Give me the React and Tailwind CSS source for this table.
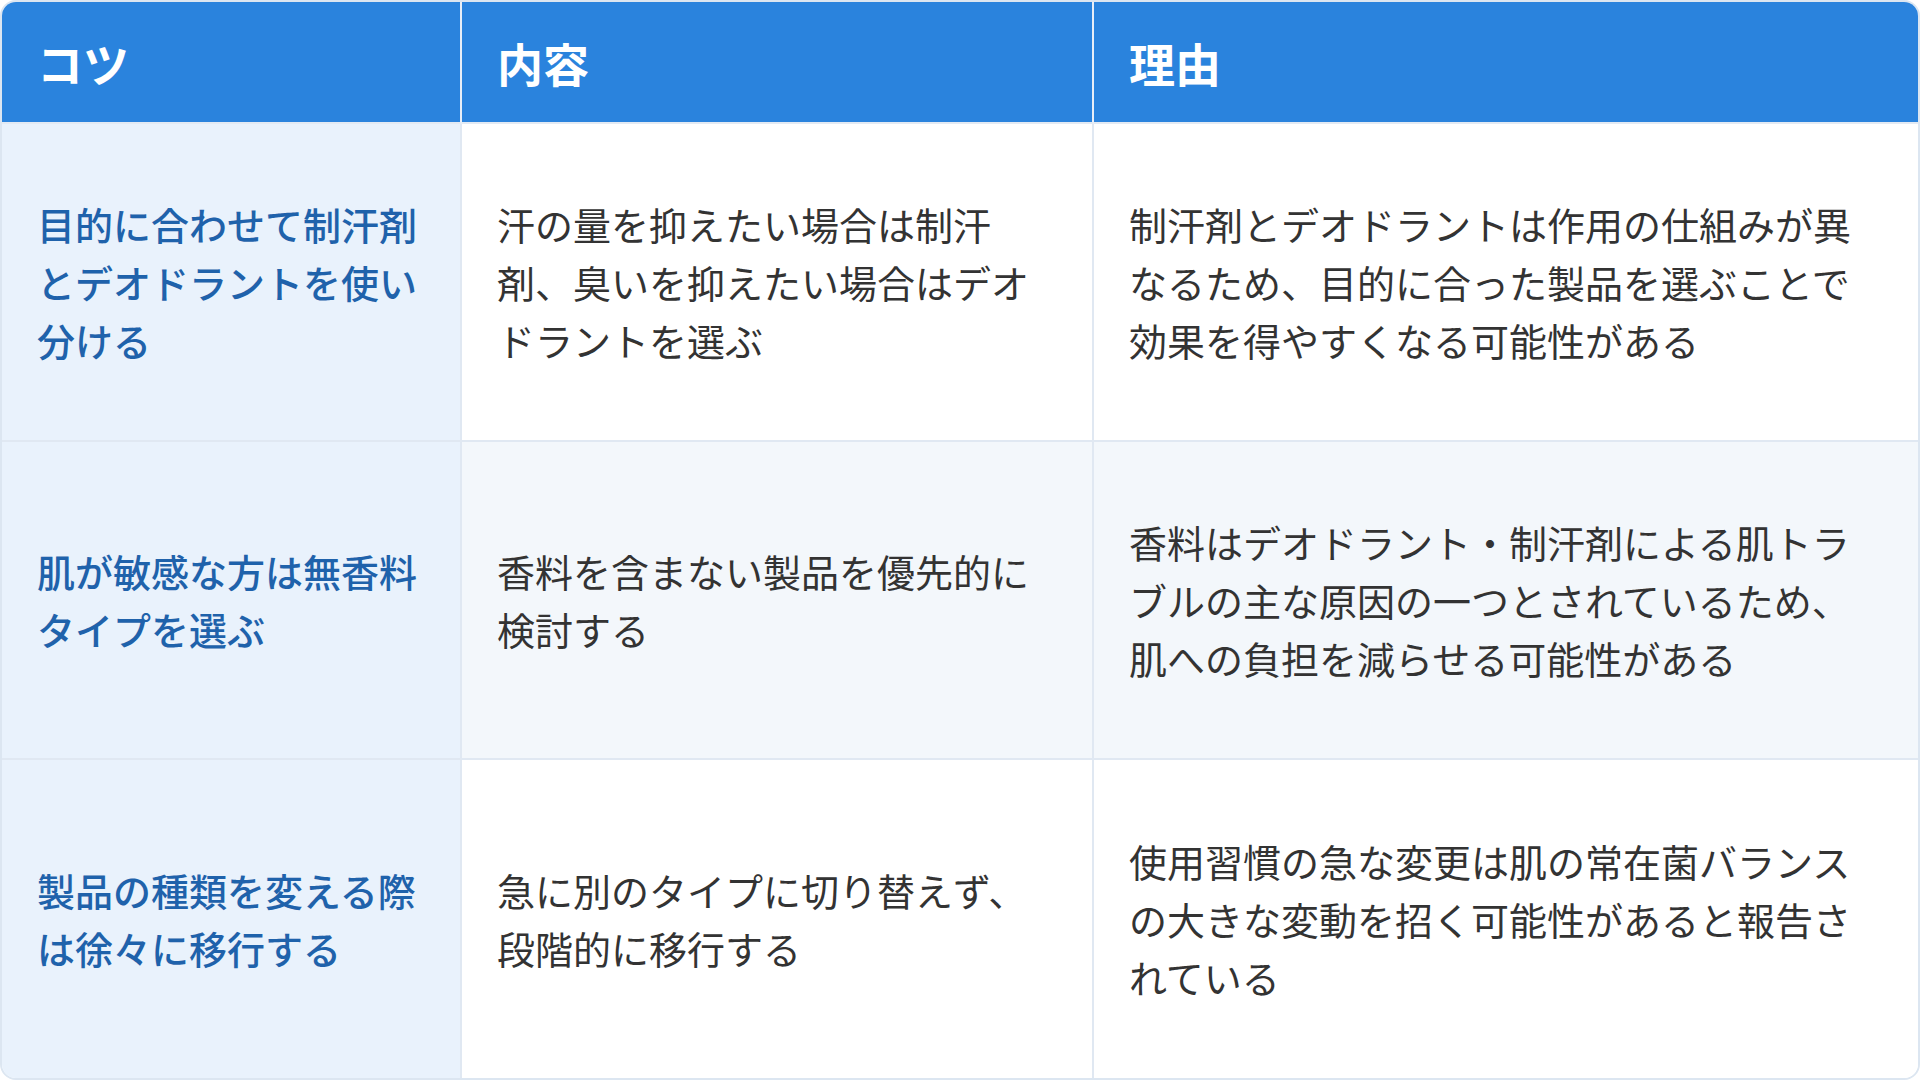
const HEAD = ['コツ', '内容', '理由']

const ROWS = [
  {
    tip: '目的に合わせて制汗剤とデオドラントを使い分ける',
    what: '汗の量を抑えたい場合は制汗剤、臭いを抑えたい場合はデオドラントを選ぶ',
    why: '制汗剤とデオドラントは作用の仕組みが異なるため、目的に合った製品を選ぶことで効果を得やすくなる可能性がある',
  },
  {
    tip: '肌が敏感な方は無香料タイプを選ぶ',
    what: '香料を含まない製品を優先的に検討する',
    why: '香料はデオドラント・制汗剤による肌トラブルの主な原因の一つとされているため、肌への負担を減らせる可能性がある',
  },
  {
    tip: '製品の種類を変える際は徐々に移行する',
    what: '急に別のタイプに切り替えず、段階的に移行する',
    why: '使用習慣の急な変更は肌の常在菌バランスの大きな変動を招く可能性があると報告されている',
  },
]

export default function App() {
  return (
    <div className="w-[1920px] h-[1080px] bg-white font-['Noto_Sans_CJK_JP','Noto_Sans',sans-serif]">
      <div className="h-full border-2 border-[#dce6f1] rounded-[16px] overflow-hidden grid grid-cols-[460px_632px_1fr] grid-rows-[122px_1fr_1fr_1fr]">
        {HEAD.map((h, i) => (
          <div
            key={h}
            className={
              'bg-[#2a83dd] text-white font-bold text-[46px] leading-none flex items-center pl-[35px] border-b-2 border-[#e3eaf3] ' +
              (i < 2 ? 'border-r-2 border-r-[#e8eef7]' : '')
            }
          >
            {h}
          </div>
        ))}
        {ROWS.map((r, i) => {
          const last = i === ROWS.length - 1
          const alt = i === 1
          return [
            <div
              key={'a' + i}
              className={
                'bg-[#e9f2fc] text-[#1f62ab] font-medium text-[38px] leading-[58px] flex items-center pl-[35px] pr-[34px] border-r-2 border-[#e0e8f2] ' +
                (last ? '' : 'border-b-2')
              }
            >
              <p>{r.tip}</p>
            </div>,
            <div
              key={'b' + i}
              className={
                (alt ? 'bg-[#f3f7fb] ' : 'bg-white ') +
                'text-[#333333] text-[38px] leading-[58px] flex items-center pl-[35px] pr-[37px] border-r-2 border-[#e0e8f2] ' +
                (last ? '' : 'border-b-2')
              }
            >
              <p>{r.what}</p>
            </div>,
            <div
              key={'c' + i}
              className={
                (alt ? 'bg-[#f3f7fb] ' : 'bg-white ') +
                'text-[#333333] text-[38px] leading-[58px] flex items-center pl-[35px] pr-[37px] border-[#e0e8f2] ' +
                (last ? '' : 'border-b-2')
              }
            >
              <p>{r.why}</p>
            </div>,
          ]
        })}
      </div>
    </div>
  )
}
